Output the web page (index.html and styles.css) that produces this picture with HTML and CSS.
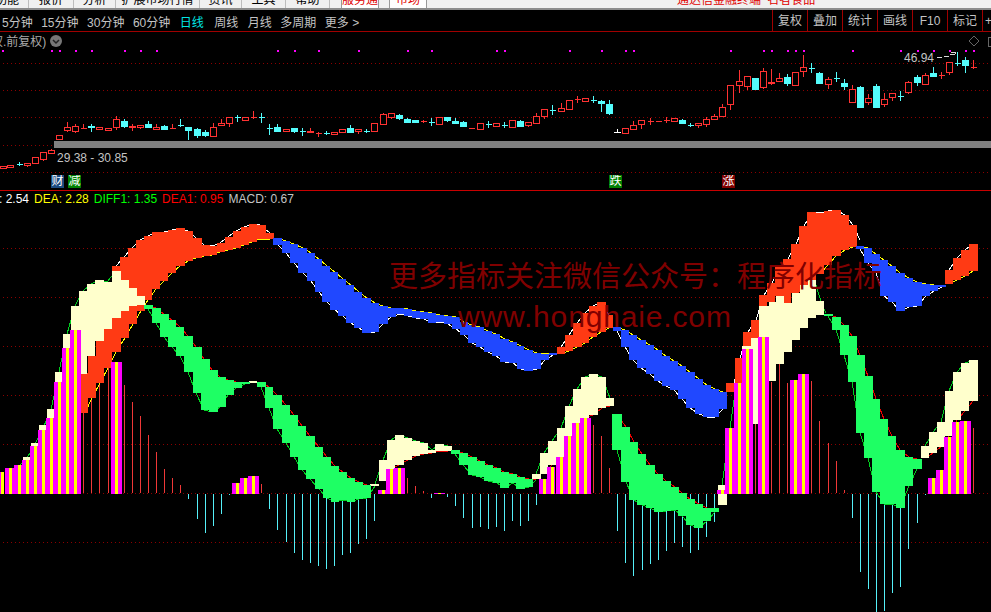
FILE: index.html
```html
<!DOCTYPE html>
<html lang="zh-CN">
<head>
<meta charset="utf-8">
<title>行情</title>
<link rel="stylesheet" href="styles.css">
</head>
<body>
<div class="app">
  <nav class="menu">
    <span class="mi mi-1">功能</span>
    <span class="mi mi-2">报价</span>
    <span class="mi mi-3">分析</span>
    <span class="mi mi-4">扩展市场行情</span>
    <span class="mi mi-3">资讯</span>
    <span class="mi mi-5">工具</span>
    <span class="mi mi-5">帮助</span>
    <span class="mb mb-1">服务通</span>
    <span class="mb mb-2">市场</span>
    <span class="mtitle">通达信金融终端 名者食品</span>
  </nav>
  <div class="toolbar">
    <div class="periods">
      <span>5分钟</span><span>15分钟</span><span>30分钟</span><span>60分钟</span>
      <span class="on">日线</span><span class="w">周线</span><span class="w">月线</span><span>多周期</span><span>更多 &gt;</span>
    </div>
    <div class="tools">
      <span>复权</span><span>叠加</span><span>统计</span><span>画线</span><span>F10</span><span>标记</span><span class="plus">+</span>
    </div>
  </div>
  <section class="kpanel">
    <div class="ktitle">权.前复权)</div>
    <svg class="kdrop" viewBox="0 0 12 12"><circle cx="6" cy="6" r="6"/><path d="M3 5l3 3 3-3"/></svg>
    <svg class="chart" width="991" height="158" viewBox="0 32 991 158">
      <path class="dots" d="M3 63.5H991M3 90.5H991M3 117.5H991M3 145.5H991M3 172.5H991"/>
      <path class="mdots" d="M2 50h2v2h-2zM51 50h2v2h-2zM59 50h2v2h-2zM75 50h2v2h-2zM91 50h2v2h-2zM124 50h2v2h-2zM140 50h2v2h-2zM156 50h2v2h-2zM277 50h2v2h-2zM294 50h2v2h-2zM318 50h2v2h-2zM358 50h2v2h-2zM407 50h2v2h-2zM431 50h2v2h-2zM496 50h2v2h-2zM504 50h2v2h-2zM569 50h2v2h-2zM601 50h2v2h-2zM625 50h2v2h-2zM633 50h2v2h-2zM730 50h2v2h-2zM763 50h2v2h-2zM771 50h2v2h-2zM787 50h2v2h-2zM795 50h2v2h-2zM803 50h2v2h-2zM852 50h2v2h-2zM900 50h2v2h-2zM917 50h2v2h-2zM933 50h2v2h-2zM949 50h2v2h-2zM965 50h2v2h-2zM973 50h2v2h-2z"/>
      <path class="kwick-r" d="M10.500 165V168M27.500 163V167M43.500 152V161M51.500 149V154M67.500 122V132M75.500 124V133M83.500 124V129M99.500 127V130M116.500 116V130M132.500 124V131M140.500 125V129M156.500 124V129M172.500 124V128M213.500 123V136M221.500 119V125M229.500 117V127M245.500 117V121M253.500 111V119M286.500 129V132M310.500 128V132M318.500 132V137M334.500 132V135M358.500 129V134M383.500 113V124M391.500 113V119M423.500 120V123M471.500 128V129M528.500 122V127M536.500 113V123M544.500 109V119M561.500 103V111M569.500 100V109M577.500 96V103M585.500 98V101M633.500 121V129M641.500 120V129M650.500 118V125M658.500 121V122M666.500 117V123M674.500 118V122M698.500 123V128M706.500 117V127M714.500 114V119M722.500 104V116M730.500 85V110M739.500 70V93M747.500 76V90M763.500 68V89M771.500 69V85M779.500 73V82M795.500 72V85M803.500 55V77M828.500 77V89M852.500 85V102M868.500 94V105M884.500 93V107M892.500 93V101M908.500 81V94M925.500 73V84M941.500 72V79M949.500 62V75M973.500 60V69"/>
      <path class="kbody-r" d="M0.500 166.500h6v2h-6zM7.500 165.500h6v2h-6zM24.500 163.500h6v2h-6zM32.500 157.500h6v6h-6zM40.500 152.500h6v7h-6zM48.500 150.500h6v3h-6zM56.500 135.500h6v4h-6zM64.500 127.500h6v3h-6zM72.500 126.500h6v5h-6zM80.500 128.500h6M96.500 127.500h6v2h-6zM105.500 128.500h6v2h-6zM113.500 119.500h6v8h-6zM129.500 126.500h6v1h-6zM137.500 125.500h6v2h-6zM153.500 127.500h6v2h-6zM169.500 128.500h6M210.500 127.500h6v9h-6zM218.500 123.500h6v2h-6zM226.500 117.500h6v6h-6zM242.500 117.500h6v3h-6zM250.500 117.500h6M283.500 129.500h6v2h-6zM307.500 131.500h6v1h-6zM315.500 133.500h6M331.500 132.500h6v2h-6zM339.500 129.500h6v3h-6zM355.500 129.500h6v2h-6zM371.500 123.500h6v8h-6zM380.500 114.500h6v10h-6zM388.500 113.500h6v4h-6zM420.500 121.500h6M436.500 117.500h6v7h-6zM468.500 128.500h6M477.500 123.500h6v6h-6zM493.500 123.500h6v3h-6zM509.500 120.500h6v7h-6zM525.500 122.500h6v3h-6zM533.500 116.500h6v7h-6zM541.500 109.500h6v7h-6zM558.500 108.500h6v3h-6zM566.500 100.500h6v9h-6zM574.500 99.500h6M582.500 98.500h6v3h-6zM622.500 128.500h6v5h-6zM630.500 125.500h6v4h-6zM638.500 120.500h6v4h-6zM647.500 121.500h6M655.500 121.500h6M663.500 120.500h6M671.500 118.500h6v3h-6zM695.500 123.500h6v2h-6zM703.500 119.500h6v5h-6zM711.500 116.500h6v3h-6zM719.500 107.500h6v9h-6zM727.500 85.500h6v19h-6zM736.500 81.500h6v4h-6zM744.500 76.500h6v10h-6zM760.500 71.500h6v16h-6zM768.500 82.500h6v1h-6zM776.500 78.500h6v3h-6zM792.500 72.500h6v13h-6zM800.500 67.500h6v4h-6zM825.500 79.500h6v5h-6zM849.500 89.500h6v13h-6zM865.500 98.500h6v4h-6zM881.500 99.500h6v5h-6zM889.500 93.500h6v4h-6zM905.500 82.500h6v10h-6zM922.500 75.500h6v9h-6zM938.500 75.500h6M946.500 62.500h6v10h-6zM970.500 67.500h6"/>
      <path class="kwick-c" d="M19.500 162V166M91.500 124V132M124.500 119V128M148.500 121V128M164.500 125V130M180.500 119V127M188.500 127V140M197.500 128V138M205.500 130V137M237.500 115V122M261.500 113V123M269.500 124V135M277.500 124V131M294.500 128V133M302.500 128V136M326.500 131V135M350.500 125V133M366.500 129V133M399.500 114V120M407.500 118V123M415.500 120V123M431.500 118V126M447.500 117V122M455.500 118V124M463.500 121V127M488.500 121V128M504.500 122V128M520.500 120V126M552.500 105V115M593.500 96V103M601.500 100V112M609.500 100V115M682.500 119V124M690.500 123V127M755.500 78V89M787.500 74V86M811.500 63V73M819.500 72V83M836.500 72V82M844.500 79V90M860.500 86V107M876.500 84V107M900.500 91V101M917.500 75V86M933.500 67V77M957.500 52V66M965.500 57V73"/>
      <path class="kbody-c" d="M16.500 164.500h6M88.500 126.500h6v1h-6zM121.500 121.500h6v5h-6zM145.500 124.500h6v3h-6zM161.500 126.500h6v3h-6zM177.500 125.500h6M185.500 127.500h6v3h-6zM194.500 129.500h6v6h-6zM202.500 132.500h6v3h-6zM234.500 117.500h6M258.500 117.500h6M266.500 128.500h6M274.500 127.500h6v4h-6zM291.500 128.500h6v3h-6zM299.500 131.500h6M323.500 133.500h6M347.500 128.500h6v4h-6zM363.500 131.500h6M396.500 115.500h6v3h-6zM404.500 119.500h6v3h-6zM412.500 120.500h6v2h-6zM428.500 122.500h6M444.500 117.500h6v3h-6zM452.500 121.500h6v2h-6zM460.500 122.500h6v4h-6zM485.500 124.500h6M501.500 125.500h6M517.500 121.500h6v5h-6zM549.500 110.500h6M590.500 100.500h6M598.500 101.500h6v2h-6zM606.500 104.500h6v9h-6zM679.500 120.500h6v3h-6zM687.500 125.500h6M752.500 78.500h6v11h-6zM784.500 77.500h6v6h-6zM808.500 68.500h6M816.500 73.500h6v10h-6zM833.500 78.500h6M841.500 83.500h6v3h-6zM857.500 87.500h6v20h-6zM873.500 86.500h6v21h-6zM897.500 96.500h6M914.500 77.500h6v5h-6zM930.500 73.500h6v3h-6zM954.500 63.500h6M962.500 60.500h6v5h-6z"/>
      <path class="kwhite" d="M617.500 129V133M614 132.500h7"/>
      <path class="greybar" d="M54 141H991V148H54z"/>
      <path class="arrow" d="M937 57H942M944 56H949M950 54.500H955M951 52.500H955V54"/>
      <path class="diamond" d="M974 36L979 41L974 46L969 41Z"/>
      <path class="corner" d="M991 37.500H988.500V46.500H991"/>
    </svg>
    <span class="hi">46.94</span>
    <span class="range">29.38 - 30.85</span>
    <span class="badge b-blue b-1">财</span>
    <span class="badge b-green b-2">减</span>
    <span class="badge b-green b-3">跌</span>
    <span class="badge b-red b-4">涨</span>
  </section>
  <section class="ipanel">
    <div class="legend">
      <span class="l-w">: 2.54</span><span class="l-y">DEA: 2.28</span><span class="l-g">DIFF1: 1.35</span><span class="l-r">DEA1: 0.95</span><span class="l-s">MACD: 0.67</span>
    </div>
    <svg class="chart" width="991" height="421" viewBox="0 191 991 421">
      <path class="dots" d="M3 248.500H991M3 297.500H991M3 346.500H991M3 395.500H991M3 444.500H991M3 493.500H991M3 542.500H991"/>
      <path class="thin-r" d="M83.500 413V493M91.500 398V493M99.500 383V493M108.500 368V493M124.500 385V493M132.500 402V493M140.500 416V493M148.500 435V493M156.500 452V493M164.500 469V493M172.500 478V493M180.500 485V493M261.500 484V493M407.500 478V493M415.500 486V493M423.500 491V493M593.500 425V493M601.500 436V493M609.500 468V493M755.500 424V493M771.500 382V493M779.500 364V493M787.500 383V493M811.500 381V493M819.500 421V493M828.500 443V493M836.500 461V493M844.500 490V493M973.500 428V493"/>
      <path class="thin-c" d="M188.500 494V499M197.500 494V519M205.500 494V533M213.500 494V526M221.500 494V514M229.500 494V495M269.500 494V509M277.500 494V530M286.500 494V542M294.500 494V553M302.500 494V560M310.500 494V563M318.500 494V566M326.500 494V569M334.500 494V566M342.500 494V555M350.500 494V553M358.500 494V544M366.500 494V539M374.500 494V521M431.500 494V498M447.500 494V497M455.500 494V506M463.500 494V518M472.500 494V528M480.500 494V527M488.500 494V529M496.500 494V527M504.500 494V531M512.500 494V521M520.500 494V526M528.500 494V521M536.500 494V505M617.500 494V531M625.500 494V563M633.500 494V576M642.500 494V570M650.500 494V564M658.500 494V560M666.500 494V551M674.500 494V543M682.500 494V547M690.500 494V553M698.500 494V550M706.500 494V537M714.500 494V522M852.500 494V518M860.500 494V572M868.500 494V589M876.500 494V612M884.500 494V611M892.500 494V593M900.500 494V587M908.500 494V549M917.500 494V523M925.500 494V495"/>

      <polyline class="e-w" points="116,266 124,257 132,248 140,240 148,236 156,232 164,232 172,230 180,228 188,231 196,238 204,245 212,246 220,243 228,237 236,231 244,227 252,224 260,225 270,233 275,239"/>
      <polyline class="e-y" points="85,413 92,398 100,383 108,368 116,352 125,338 133,324 141,311 148,300 156,289 164,281 172,273 180,266 188,261 196,258 204,256 212,255 220,252 228,250 236,248 244,245 252,242 260,239 270,239"/>
      <polyline class="e-g" points="15,470 27,458 35,444 43,428 51,410 59,372 67,334 75,306 83,291 91,284 99,280 107,282 116,271"/>
      <polyline class="e-r" points="148,305 156,308 164,314 172,320 180,327 188,336 196,347 204,359 212,370 220,377 228,380 236,382 245,382"/>
      <polyline class="e-g" points="148,309 156,323 164,337 172,347 180,356 188,372 196,393 204,410 212,412 220,407 228,395 236,388 245,384"/>
      <polyline class="e-r" points="261,382 269,387 277,395 286,405 294,415 302,426 310,436 319,447 327,457 335,466 343,472 351,478 359,482 367,485 375,485"/>
      <polyline class="e-g" points="261,387 269,408 277,429 286,443 294,457 302,470 310,479 319,489 327,498 335,502 343,500 351,502 359,499 367,498 375,486"/>
      <polyline class="e-g" points="375,484 383,460 391,440 399,435 408,438 416,441 424,443 432,450 440,444 448,446"/>
      <polyline class="e-r" points="383,481 391,469 399,465 408,460 416,456 424,454 432,453 440,451 448,451"/>
      <polyline class="e-r" points="455,450 463,453 472,457 480,461 488,465 497,468 504,472 513,474 520,477 529,479 536,479"/>
      <polyline class="e-g" points="455,454 463,465 472,475 480,477 488,481 497,483 504,488 513,483 520,489 529,487 536,480"/>
      <polyline class="e-g" points="536,474 544,453 552,441 561,428 569,406 577,389 585,377 593,374 602,377 610,398"/>
      <polyline class="e-r" points="544,474 552,465 561,457 569,436 577,423 585,418 593,415 602,408 610,406"/>
      <polyline class="e-r" points="617,414 626,427 634,442 642,454 650,465 658,474 666,481 675,487 682,493 690,499 699,504 707,508 715,510"/>
      <polyline class="e-g" points="617,450 626,482 634,500 642,505 650,508 658,512 666,511 675,510 682,516 690,525 699,528 707,521 715,512"/>
      <polyline class="e-g" points="718,505 722,485 730,428 734,400"/>
      <polyline class="e-w" points="734,383 740,358 748,332 756,320 764,295 772,283 780,267 788,259 796,244 804,226 812,212 820,213 828,211 836,210 845,215 853,225 860,240"/>
      <polyline class="e-y" points="820,274 828,265 836,256 845,250 853,247 858,246"/>
      <polyline class="e-g" points="816,285 822,305 826,313"/>
      <polyline class="e-r" points="776,364 784,352 792,340 800,328 808,318 816,315 824,314"/>
      <polyline class="e-r" points="828,314 836,317 844,325 852,336 860,355 868,376 876,399 884,419 892,436 900,450 909,457 917,459"/>
      <polyline class="e-g" points="828,316 836,330 844,355 852,382 860,433 868,458 876,492 884,504 892,504 900,508 909,486 917,469"/>
      <polyline class="e-g" points="925,446 933,432 941,422 949,391 957,372 965,363 973,360"/>
      <polyline class="e-r" points="925,458 933,453 941,447 949,436 957,420 965,411 973,401"/>
      <polyline class="e-w" points="561,347 569,335 577,323 585,313 593,306 601,302 609,315"/>
      <polyline class="e-y" points="561,354 569,351 577,347 585,343 593,337 601,332 609,328"/>
      <polyline class="e-y" points="278,238 286,241 294,244 303,248 311,253 319,259 327,266 335,272 343,279 351,285 359,292 367,298 375,303 383,306 391,308 400,308 408,309 416,311 424,312 432,313 440,315 448,316 456,317 464,322 472,325 480,327 488,331 496,334 505,339 513,342 521,346 529,350 537,353 545,354 553,353"/>
      <polyline class="e-w" points="278,245 286,253 294,263 303,273 311,281 319,292 327,302 335,310 343,316 351,323 359,328 367,333 375,332 383,324 391,317 400,314 408,316 416,318 424,319 432,323 440,322 448,324 456,329 464,335 472,343 480,347 488,352 496,356 505,362 513,363 521,369 529,371 537,369 545,360 553,355"/>
      <polyline class="e-y" points="617,327 625,330 633,335 641,340 650,345 658,350 666,356 674,361 682,366 690,372 699,379 707,385 715,389 723,392"/>
      <polyline class="e-w" points="617,331 625,347 633,360 641,368 650,374 658,381 666,386 674,390 682,399 690,408 699,414 707,417 715,417 723,409"/>
      <polyline class="e-y" points="860,246 868,248 876,254 884,260 892,266 900,273 909,278 917,282 926,284 934,285 942,285"/>
      <polyline class="e-w" points="860,249 868,263 876,273 884,296 892,302 900,311 909,307 917,306 926,296 934,291 942,287"/>
      <polyline class="e-w" points="949,270 957,258 965,250 973,244"/>
      <polyline class="e-y" points="949,284 957,280 965,276 973,271"/>

      <path class="rb-red" d="M81 373H88V413H81zM88 356H96V398H88zM96 341H104V383H96zM104 329H112V368H104zM112 266H121V352H112zM120 257H129V338H120zM128 248H137V324H128zM136 240H145V311H136zM144 236H152V300H144zM152 232H160V289H152zM160 232H168V281H160zM168 230H176V273H168zM176 228H185V266H176zM185 231H193V261H185zM193 238H202V258H193zM202 245H210V256H202zM210 246H217V255H210zM217 243H225V252H217zM225 237H233V250H225zM233 231H241V248H233zM241 227H249V245H241zM249 224H257V242H249zM257 225H266V239H257zM266 233H274V239H266z
      M557 347H565V354H557zM565 335H573V351H565zM573 323H582V347H573zM582 313H589V343H582zM589 306H597V337H589zM597 302H606V332H597zM606 315H613V328H606z
      M726 383H734V392H726zM735 358H743V383H735zM743 332H751V346H743zM751 320H759V338H751zM759 295H767V306H759zM767 283H775V302H767zM775 267H783V296H775zM783 259H791V303H783zM791 244H799V293H791zM799 226H807V292H799zM807 212H816V292H807zM816 213H824V274H816zM824 211H832V265H824zM832 210H841V256H832zM841 215H849V250H841zM849 225H857V247H849z
      M945 270H953V284H945zM953 258H961V280H953zM961 250H969V276H961zM969 244H978V271H969z"/>
      <path class="rb-cream" d="M23 457H30V460H23zM31 443H38V446H31zM39 425H46V430H39zM47 409H54V418H47zM55 372H63V382H55zM63 334H71V348H63zM71 306H79V380H71zM79 291H87V374H79zM87 284H95V356H87zM95 280H104V341H95zM104 282H112V329H104zM112 271H121V318H112zM121 280H129V311H121zM129 288H137V306H129zM137 296H145V305H137zM249 381H257V383H249z
      M370 484H379V486H370zM379 460H387V481H379zM387 440H395V469H387zM395 435H404V465H395zM404 438H412V460H404zM412 441H420V456H412zM420 443H428V454H420zM428 450H436V453H428zM435 444H444V451H435zM444 446H452V451H444z
      M532 474H541V479H532zM540 453H548V474H540zM548 441H557V465H548zM557 428H565V457H557zM565 406H573V436H565zM573 389H581V423H573zM581 377H589V418H581zM589 374H598V415H589zM598 377H606V408H598zM606 398H614V406H606z
      M718 485H727V505H718zM742 346H751V424H742zM751 338H759V424H751zM759 306H769V400H759zM769 302H776V381H769zM776 296H784V364H776zM784 303H792V352H784zM792 293H800V340H792zM800 285H808V328H800zM808 280H816V318H808zM816 301H824V315H816z
      M921 446H929V458H921zM929 432H937V453H929zM937 422H945V447H937zM945 391H953V436H945zM953 372H961V420H953zM961 363H969V411H961zM969 360H978V401H969z"/>
      <path class="rb-green" d="M144 305H153V309H144zM152 308H161V323H152zM160 314H169V337H160zM168 320H176V347H168zM176 327H184V356H176zM184 336H193V372H184zM193 347H202V393H193zM201 359H210V410H201zM209 370H218V412H209zM218 377H226V407H218zM226 380H234V395H226zM234 382H242V388H234zM242 382H250V384H242z
      M257 382H266V387H257zM265 387H273V408H265zM273 395H282V429H273zM282 405H290V443H282zM290 415H298V457H290zM298 426H306V470H298zM306 436H315V479H306zM315 447H323V489H315zM323 457H331V498H323zM331 466H339V502H331zM339 472H347V500H339zM347 478H355V502H347zM355 482H363V499H355zM363 485H371V498H363z
      M451 450H460V454H451zM459 453H468V465H459zM468 457H477V475H468zM476 461H485V477H476zM484 465H493V481H484zM493 468H501V483H493zM500 472H509V488H500zM509 474H517V483H509zM516 477H525V489H516zM525 479H533V487H525z
      M612 414H622V450H612zM621 427H630V482H621zM629 442H638V500H629zM637 454H646V505H637zM646 465H655V508H646zM654 474H663V512H654zM662 481H671V511H662zM671 487H679V510H671zM678 493H687V516H678zM686 499H695V525H686zM694 504H703V528H694zM703 508H711V521H703zM710 508H719V512H710z
      M824 314H833V316H824zM832 317H841V330H832zM840 325H849V355H840zM848 336H857V382H848zM856 355H865V433H856zM864 376H873V458H864zM872 399H880V492H872zM880 419H888V504H880zM888 436H896V504H888zM896 450H905V508H896zM905 457H913V486H905zM913 459H922V469H913z"/>
      <path class="rb-blue" d="M273 238H282V245H273zM282 241H290V253H282zM290 244H298V263H290zM298 248H307V273H298zM307 253H315V281H307zM315 259H322V292H315zM322 266H330V302H322zM330 272H338V310H330zM338 279H346V316H338zM346 285H354V323H346zM354 292H362V328H354zM362 298H371V333H362zM371 303H379V332H371zM379 306H388V324H379zM388 308H396V317H388zM396 308H404V314H396zM404 309H412V316H404zM412 311H420V318H412zM420 312H428V319H420zM428 313H436V323H428zM436 315H444V322H436zM444 316H452V324H444zM452 317H460V329H452zM460 322H468V335H460zM468 325H476V343H468zM476 327H484V347H476zM484 331H492V352H484zM492 334H500V356H492zM500 339H509V362H500zM509 342H517V363H509zM517 346H524V369H517zM524 350H533V371H524zM533 353H541V369H533zM541 354H549V360H541zM549 353H557V355H549z
      M613 327H621V331H613zM621 330H629V347H621zM629 335H637V360H629zM637 340H646V368H637zM646 345H654V374H646zM654 350H662V381H654zM662 356H670V386H662zM670 361H678V390H670zM678 366H686V399H678zM686 372H695V408H686zM695 379H703V414H695zM703 385H711V417H703zM711 389H719V417H711zM719 392H727V409H719z
      M856 246H864V249H856zM864 248H872V263H864zM872 254H880V273H872zM880 260H888V296H880zM888 266H896V302H888zM896 273H905V311H896zM905 278H913V307H905zM913 282H922V306H913zM922 284H930V296H922zM930 285H938V291H930zM938 285H946V287H938z"/>
      <path class="bar-m" d="M0 472H4V494H0zM5 468H14V494H5zM14 465H22V494H14zM22 460H30V494H22zM30 446H38V494H30zM38 430H46V494H38zM46 418H54V494H46zM54 382H62V494H54zM62 348H70V494H62zM70 330H81V494H70zM111 362H122V494H111zM232 483H240V494H232zM240 478H248V494H240zM248 476H259V494H248zM378 490H386V494H378zM386 469H394V494H386zM394 468H405V494H394zM434 493H445V494H434zM539 479H547V494H539zM547 467H555V494H547zM556 457H564V494H556zM564 436H572V494H564zM572 423H580V494H572zM580 418H591V494H580zM717 490H725V494H717zM725 428H734V494H725zM734 383H742V494H734zM742 349H753V424H742zM742 424H753V494H742zM758 337H769V494H758zM790 380H798V494H790zM798 374H809V494H798zM928 478H936V494H928zM936 470H944V494H936zM944 437H952V494H944zM952 422H960V494H952zM960 421H971V494H960z"/>
      <path class="bar-y" d="M1 472H4V494H1zM9 468H12V494H9zM18 465H21V494H18zM26 460H29V494H26zM34 446H37V494H34zM42 430H45V494H42zM50 418H53V494H50zM58 382H61V494H58zM66 348H69V494H66zM74 330H77V494H74zM115 362H118V494H115zM236 483H239V494H236zM244 478H247V494H244zM252 476H255V494H252zM382 490H385V494H382zM390 469H393V494H390zM398 468H401V494H398zM438 493H441V494H438zM543 479H546V494H543zM551 467H554V494H551zM560 457H563V494H560zM568 436H571V494H568zM576 423H579V494H576zM584 418H587V494H584zM721 490H724V494H721zM729 428H732V494H729zM738 383H741V494H738zM746 349H749V494H746zM762 337H765V494H762zM794 380H797V494H794zM802 374H805V494H802zM932 478H935V494H932zM940 470H943V494H940zM948 437H951V494H948zM956 422H959V494H956zM964 421H967V494H964z"/>
    </svg>
    <div class="wm wm-cn">更多指标关注微信公众号<span class="wm-colon">：</span>程序化指标</div>
    <div class="wm wm-en">www.honghaie.com</div>
  </section>
</div>
</body>
</html>
```

FILE: styles.css
```css
* { box-sizing: border-box; }
html, body { margin: 0; padding: 0; background: #000; }
body { font-family: "Liberation Sans", "Noto Sans CJK SC", sans-serif; font-size: 12px; }
.app { width: 991px; height: 612px; overflow: hidden; display: flex; flex-direction: column; }

.menu { height: 10px; flex: none; display: flex; overflow: hidden; background: #f0f0f0; border-bottom: 2px solid #8c8c8c; color: #000; }
.mi, .mb, .mtitle { display: block; height: 8px; line-height: 0; overflow: hidden; white-space: nowrap; }
.mi { text-align: center; border-right: 1px solid #bdbdbd; }
.mi-1 { width: 29px; padding-right: 12px; text-indent: -5px; }
.mi-2 { width: 45px; }
.mi-3 { width: 42px; }
.mi-4 { width: 84px; }
.mi-5 { width: 44px; }
.mb { width: 38px; background: #fff; color: #e00000; text-align: center; border-left: 1px solid #999; border-right: 1px solid #999; }
.mb-1 { margin-left: 11px; }
.mb-2 { margin-left: 10px; }
.mtitle { margin-left: 250px; color: #e00000; word-spacing: 3px; }

.toolbar { height: 21px; flex: none; display: flex; justify-content: space-between; color: #c4c4c4; font-size: 12px; }
.periods { display: flex; gap: 8.5px; padding: 1px 0 0 2px; align-items: center; white-space: nowrap; }
.periods .on { color: #00e6e6; margin: 0 1px; }
.periods .w { margin-left: 1px; }
.tools { display: flex; }
.tools span { width: 35px; height: 21px; border-left: 1px solid #a00000; text-align: center; line-height: 23px; white-space: nowrap; }
.tools .plus { width: 9px; overflow: hidden; text-align: left; padding-left: 2px; }

.kpanel { position: relative; height: 160px; flex: none; border-top: 1px solid #a00000; border-bottom: 1px solid #c80000; }
.ipanel { position: relative; flex: 1; }
.chart { display: block; shape-rendering: crispEdges; }

.ktitle { position: absolute; left: -9px; top: 2px; color: #aaa; line-height: 17px; white-space: nowrap; }
.kdrop { position: absolute; left: 50px; top: 3px; width: 12px; height: 12px; }
.kdrop circle { fill: #777; }
.kdrop path { fill: none; stroke: #222; stroke-width: 1.5; }

.dots { fill: none; stroke: #8c0000; stroke-width: 1; stroke-dasharray: 1 3; }
.mdots { fill: #f0f; }
.kwick-r { fill: none; stroke: #ff3232; }
.kbody-r { fill: #000; stroke: #ff3232; }
.kwick-c { fill: none; stroke: #54fcfc; }
.kbody-c { fill: #54fcfc; stroke: #54fcfc; }
.kwhite { fill: none; stroke: #fff; }
.greybar { fill: #808080; }
.arrow { fill: none; stroke: #d8d8d8; }
.diamond { fill: none; stroke: #666; shape-rendering: auto; }
.corner { fill: none; stroke: #666; }

.hi { position: absolute; left: 904px; top: 19px; color: #c4c4c4; line-height: 14px; }
.range { position: absolute; left: 57px; top: 119px; color: #c4c4c4; line-height: 14px; }
.badge { position: absolute; top: 143px; width: 13px; height: 13px; color: #fff; text-align: center; line-height: 13px; font-size: 12px; overflow: hidden; }
.b-blue { background: #1a4a80; }
.b-green { background: #008000; }
.b-red { background: #800000; }
.b-1 { left: 51px; }
.b-2 { left: 68px; }
.b-3 { left: 609px; }
.b-4 { left: 722px; }

.legend { position: absolute; left: -1px; top: 0; height: 17px; display: flex; gap: 5px; line-height: 16px; white-space: nowrap; }
.l-w { color: #fff; }
.l-y { color: #ff0; }
.l-g { color: #0f0; }
.l-r { color: #f00; }
.l-s { color: #c4c4c4; }

.thin-r { fill: none; stroke: #f03838; }
.thin-c { fill: none; stroke: #55f0f8; }
.e-w, .e-y, .e-g, .e-r { fill: none; stroke-width: 1; }
.e-w { stroke: #fff; }
.e-y { stroke: #ff0; }
.e-g { stroke: #00d020; }
.e-r { stroke: #f00000; }
.rb-red { fill: #ff3a14; }
.rb-cream { fill: #ffffcc; }
.rb-green { fill: #1eff64; }
.rb-blue { fill: #2048ff; }
.bar-m { fill: #f0f; }
.bar-y { fill: #ff0; }

.wm { position: absolute; color: #800000; white-space: nowrap; }
.wm-cn { left: 389px; top: 63px; font-family: "Noto Sans CJK SC", sans-serif; font-size: 29px; line-height: 40px; }
.wm-colon { font-family: "Noto Sans CJK TC", sans-serif; }
.wm-en { left: 458px; top: 108px; font-size: 30px; line-height: 36px; letter-spacing: 0.85px; }
```
